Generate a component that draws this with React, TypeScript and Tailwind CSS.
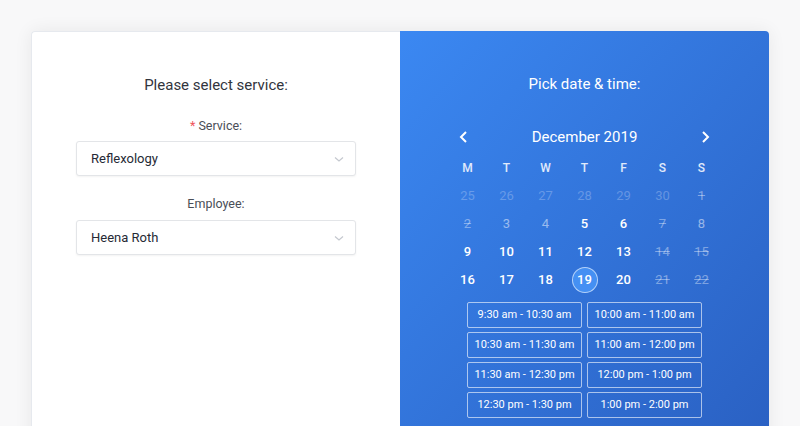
import React from 'react';

type Day = { n: number; kind: 'out' | 'dim' | 'off' | 'on' | 'sel' };

const rows: Day[][] = [
  [
    { n: 25, kind: 'out' },
    { n: 26, kind: 'out' },
    { n: 27, kind: 'out' },
    { n: 28, kind: 'out' },
    { n: 29, kind: 'out' },
    { n: 30, kind: 'out' },
    { n: 1, kind: 'off' },
  ],
  [
    { n: 2, kind: 'off' },
    { n: 3, kind: 'dim' },
    { n: 4, kind: 'dim' },
    { n: 5, kind: 'on' },
    { n: 6, kind: 'on' },
    { n: 7, kind: 'off' },
    { n: 8, kind: 'dim' },
  ],
  [
    { n: 9, kind: 'on' },
    { n: 10, kind: 'on' },
    { n: 11, kind: 'on' },
    { n: 12, kind: 'on' },
    { n: 13, kind: 'on' },
    { n: 14, kind: 'off' },
    { n: 15, kind: 'off' },
  ],
  [
    { n: 16, kind: 'on' },
    { n: 17, kind: 'on' },
    { n: 18, kind: 'on' },
    { n: 19, kind: 'sel' },
    { n: 20, kind: 'on' },
    { n: 21, kind: 'off' },
    { n: 22, kind: 'off' },
  ],
];

const slots = [
  '9:30 am - 10:30 am',
  '10:00 am - 11:00 am',
  '10:30 am - 11:30 am',
  '11:00 am - 12:00 pm',
  '11:30 am - 12:30 pm',
  '12:00 pm - 1:00 pm',
  '12:30 pm - 1:30 pm',
  '1:00 pm - 2:00 pm',
];

const Chevron = () => (
  <svg width="12" height="12" viewBox="0 0 12 12" fill="none" stroke="#c4c8cf" strokeWidth="1.2">
    <path d="M2 4.5 L6 8 L10 4.5" />
  </svg>
);

const Select = ({ value }: { value: string }) => (
  <div className="flex h-[35px] w-[280px] items-center justify-between rounded-[3px] border border-[#e3e5e8] bg-white pl-[14px] pr-[10px] shadow-[0_1px_2px_rgba(0,0,0,0.05)]">
    <span className="text-[13px] text-[#262a35]">{value}</span>
    <Chevron />
  </div>
);

const DayCell = ({ d }: { d: Day }) => {
  let cls = 'text-white font-medium';
  if (d.kind === 'out') cls = 'text-white/25';
  if (d.kind === 'dim') cls = 'text-white/50';
  if (d.kind === 'off') cls = 'text-white/40 line-through';
  return (
    <div className="flex h-[28px] w-[39px] items-center justify-center">
      {d.kind === 'sel' ? (
        <span className="flex h-[26px] w-[26px] items-center justify-center rounded-full border border-white/60 bg-[#4590f3] text-[13px] font-medium text-white">
          {d.n}
        </span>
      ) : (
        <span className={`text-[13px] ${cls}`}>{d.n}</span>
      )}
    </div>
  );
};

export default function App() {
  return (
    <div
      className="h-[426px] w-[800px] overflow-hidden bg-[#f8f8f9] px-[31px] pt-[31px]"
      style={{ fontFamily: 'Roboto, "Noto Sans", sans-serif' }}
    >
      <div className="flex h-[420px] rounded-t-[4px] shadow-[0_0_18px_rgba(0,0,0,0.07)]">
        <div className="flex w-[369px] flex-col items-center rounded-tl-[4px] border-l border-t border-[#e6e9ee] bg-white pt-[42px]">
          <h2 className="text-[15px] text-[#32353d]">Please select service:</h2>
          <div className="mt-[20px] text-[12.5px] text-[#4a4e57]">
            <span className="text-[#f0545c]">*</span> Service:
          </div>
          <div className="mt-[6px]">
            <Select value="Reflexology" />
          </div>
          <div className="mt-[19px] text-[12.5px] text-[#4a4e57]">Employee:</div>
          <div className="mt-[6px]">
            <Select value="Heena Roth" />
          </div>
        </div>
        <div className="flex flex-1 flex-col items-center rounded-tr-[4px] bg-gradient-to-br from-[#3b88f2] to-[#2a60c2] pt-[42px] text-white">
          <h2 className="text-[15px]">Pick date &amp; time:</h2>
          <div className="mt-[30px] flex w-[256px] items-center justify-between">
            <svg width="14" height="14" viewBox="0 0 14 14" fill="none" stroke="white" strokeWidth="2">
              <path d="M9 2 L4 7 L9 12" />
            </svg>
            <span className="text-[15px]">December 2019</span>
            <svg width="14" height="14" viewBox="0 0 14 14" fill="none" stroke="white" strokeWidth="2">
              <path d="M5 2 L10 7 L5 12" />
            </svg>
          </div>
          <div className="mt-[6px] grid grid-cols-7">
            {['M', 'T', 'W', 'T', 'F', 'S', 'S'].map((w, i) => (
              <div key={i} className="flex h-[28px] w-[39px] items-center justify-center text-[12px] font-medium text-white/85">
                {w}
              </div>
            ))}
            {rows.flat().map((d, i) => (
              <DayCell key={i} d={d} />
            ))}
          </div>
          <div className="mt-[8px] grid grid-cols-[115px_115px] gap-x-[5px] gap-y-[4px]">
            {slots.map((s) => (
              <div
                key={s}
                className="flex h-[26px] items-center justify-center rounded-[2px] border-[1.5px] border-white/60 text-[11px] text-white"
              >
                {s}
              </div>
            ))}
          </div>
        </div>
      </div>
    </div>
  );
}
